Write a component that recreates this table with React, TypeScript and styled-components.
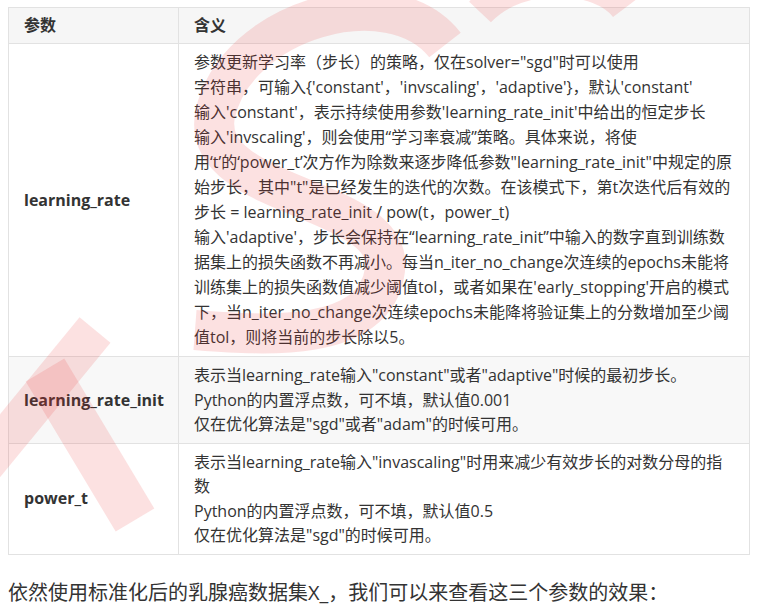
import React from "react";
import styled, { createGlobalStyle } from "styled-components";

const GlobalStyle = createGlobalStyle`
  html, body { margin: 0; padding: 0; background: #ffffff; }
  body {
    font-family: "Open Sans", "Noto Sans CJK SC", sans-serif;
    color: #333333;
  }
`;

const Page = styled.div`
  position: relative;
  width: 760px;
  height: 613px;
  overflow: hidden;
  padding: 7px 10px 0 8px;
  box-sizing: border-box;
`;

const Table = styled.table`
  width: 742px;
  border-collapse: collapse;
  table-layout: fixed;
  font-size: 16px;
  line-height: 25px;
`;

const HeadCell = styled.th<{ $w?: number }>`
  width: ${(p) => (p.$w ? `${p.$w}px` : "auto")};
  box-sizing: border-box;
  text-align: left;
  font-weight: 700;
  padding: 5px 15px;
  background: #f6f6f6;
  border: 1px solid #e2e2e2;
  color: #333;
`;

const Row = styled.tr<{ $shade?: boolean; $tight?: boolean }>`
  background: ${(p) => (p.$shade ? "#f8f8f8" : "#ffffff")};
  line-height: ${(p) => (p.$tight ? "24.5px" : "25px")};
`;

const ParamCell = styled.td`
  padding: 6px 15px;
  border: 1px solid #e2e2e2;
  font-weight: 700;
  vertical-align: middle;
  white-space: nowrap;
  color: #333;
`;

const DescCell = styled.td`
  padding: 6px 15px;
  border: 1px solid #e2e2e2;
  vertical-align: middle;
  color: #333;
`;

const Line = styled.span`
  display: block;
  white-space: nowrap;
`;

const Paragraph = styled.p`
  margin: 23px 0 0 0;
  font-size: 20px;
  line-height: 30px;
  color: #333;
`;

const Watermark = styled.svg`
  position: absolute;
  left: 0;
  top: 0;
  pointer-events: none;
`;

const rows: { param: string; lines: string[]; shade?: boolean; tight?: boolean }[] = [
  {
    param: "learning_rate",
    lines: [
      '参数更新学习率（步长）的策略，仅在solver="sgd"时可以使用',
      "字符串，可输入{'constant'，'invscaling'，'adaptive'}，默认'constant'",
      "输入'constant'，表示持续使用参数'learning_rate_init'中给出的恒定步长",
      "输入'invscaling'，则会使用“学习率衰减”策略。具体来说，将使",
      '用‘t’的‘power_t’次方作为除数来逐步降低参数"learning_rate_init"中规定的原',
      '始步长，其中"t"是已经发生的迭代的次数。在该模式下，第t次迭代后有效的',
      "步长 = learning_rate_init / pow(t，power_t)",
      "输入'adaptive'，步长会保持在“learning_rate_init”中输入的数字直到训练数",
      "据集上的损失函数不再减小。每当n_iter_no_change次连续的epochs未能将",
      "训练集上的损失函数值减少阈值tol，或者如果在'early_stopping'开启的模式",
      "下，当n_iter_no_change次连续epochs未能降将验证集上的分数增加至少阈",
      "值tol，则将当前的步长除以5。",
    ],
  },
  {
    param: "learning_rate_init",
    shade: true,
    tight: true,
    lines: [
      '表示当learning_rate输入"constant"或者"adaptive"时候的最初步长。',
      "Python的内置浮点数，可不填，默认值0.001",
      '仅在优化算法是"sgd"或者"adam"的时候可用。',
    ],
  },
  {
    param: "power_t",
    tight: true,
    lines: [
      '表示当learning_rate输入"invascaling"时用来减少有效步长的对数分母的指',
      "数",
      "Python的内置浮点数，可不填，默认值0.5",
      '仅在优化算法是"sgd"的时候可用。',
    ],
  },
];

export default function App() {
  return (
    <Page>
      <GlobalStyle />
      <Table>
        <thead>
          <tr>
            <HeadCell $w={170}>参数</HeadCell>
            <HeadCell>含义</HeadCell>
          </tr>
        </thead>
        <tbody>
          {rows.map((r) => (
            <Row key={r.param} $shade={r.shade} $tight={r.tight}>
              <ParamCell>{r.param}</ParamCell>
              <DescCell>
                {r.lines.map((l, i) => (
                  <Line key={i}>{l}</Line>
                ))}
              </DescCell>
            </Row>
          ))}
        </tbody>
      </Table>
      <Paragraph>依然使用标准化后的乳腺癌数据集X_，我们可以来查看这三个参数的效果：</Paragraph>
      <Watermark width="760" height="613" viewBox="0 0 760 613">
        <g fill="none" stroke="rgb(235,40,40)" strokeOpacity="0.14" strokeLinecap="butt">
          <path d="M -20 470 L 95 330" strokeWidth="40" />
          <path d="M 45 370 L 135 520" strokeWidth="45" />
          <path d="M 445 45 C 390 -25, 235 20, 215 115 C 200 200, 395 195, 385 270 C 375 345, 260 335, 195 330" strokeWidth="40" />
          <path d="M 480 12 C 520 -30, 600 -25, 625 8" strokeWidth="30" />
        </g>
      </Watermark>
    </Page>
  );
}
